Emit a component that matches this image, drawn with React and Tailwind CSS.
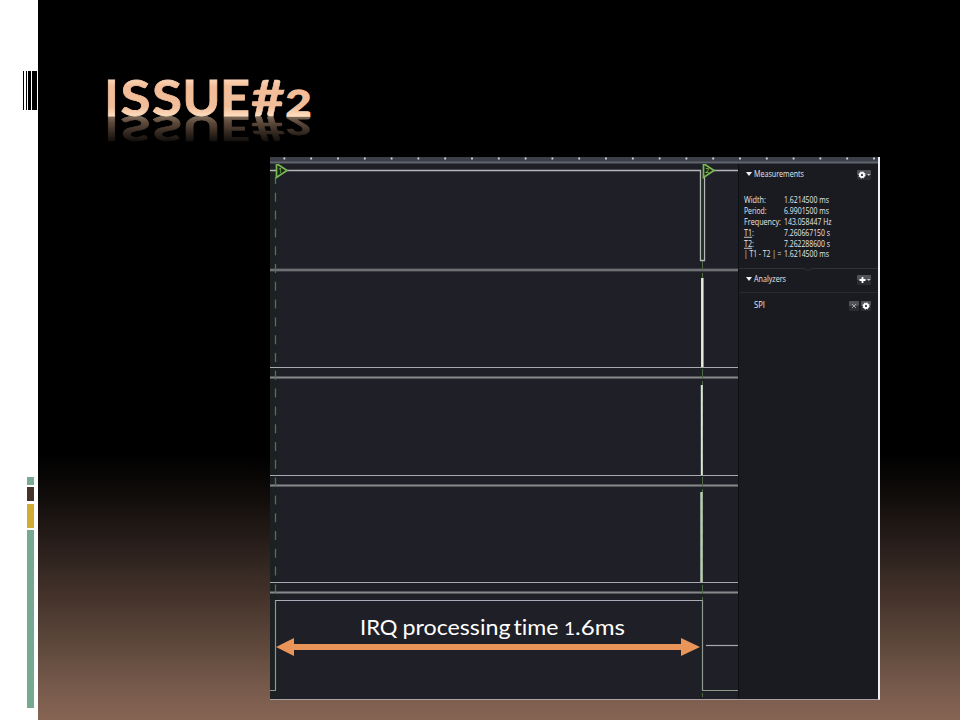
import React from "react";

// Title letters: glyph, left edge, advance width, font size, outline width
const LETTERS = [
  ["I", 66.6, 14, 49, 0.8],
  ["S", 82.5, 30, 49, 0.8],
  ["S", 114, 30, 49, 0.8],
  ["U", 144.5, 38, 49, 0.8],
  ["E", 182, 30, 49, 0.8],
  ["#", 213, 34, 49, 0.5],
  ["2", 247.5, 26, 37, 1.3],
];

function Title() {
  return (
    <svg className="block h-[157px] w-[322px] font-['Lato',sans-serif] font-bold" viewBox="0 0 322 157">
      <defs>
        <linearGradient id="peach" gradientUnits="userSpaceOnUse" x1="0" y1="-36" x2="0" y2="0">
          <stop offset="0" stopColor="#fbd5b8" />
          <stop offset="0.2" stopColor="#f3bd98" />
          <stop offset="0.75" stopColor="#f1bd99" />
          <stop offset="1" stopColor="#fddcbc" />
        </linearGradient>
        <linearGradient id="fade" gradientUnits="userSpaceOnUse" x1="0" y1="116" x2="0" y2="143">
          <stop offset="0" stopColor="#fff" stopOpacity="0.5" />
          <stop offset="1" stopColor="#fff" stopOpacity="0.04" />
        </linearGradient>
        <mask id="fadeMask" maskUnits="userSpaceOnUse" x="50" y="116" width="270" height="36">
          <rect x="50" y="116" width="270" height="36" fill="url(#fade)" />
        </mask>
        <filter id="soft"><feGaussianBlur stdDeviation="0.7" /></filter>
      </defs>
      <g transform="translate(0 115.5)">
        <g id="word" fill="url(#peach)" stroke="url(#peach)">
          {LETTERS.map(([c, x, w, size, sw], i) => (
            <text key={i} x={x} y="0" fontSize={size} strokeWidth={sw} textLength={w} lengthAdjust="spacingAndGlyphs">{c}</text>
          ))}
        </g>
      </g>
      <g mask="url(#fadeMask)">
        <g transform="translate(0 116) scale(1 -0.7)" filter="url(#soft)">
          <use href="#word" />
        </g>
      </g>
    </svg>
  );
}

function SideStrip() {
  return (
    <aside className="flex h-full w-[38px] shrink-0 flex-col items-end bg-white pt-[71px]">
      <div className="mr-[1px] flex h-[39px] w-[14px]">
        <div className="w-px bg-black" />
        <div className="ml-[2px] w-px bg-black" />
        <div className="ml-px w-[3px] bg-black" />
        <div className="ml-px w-[5px] bg-black" />
      </div>
      <div className="mr-[4px] mt-[367px] flex w-[7px] flex-col">
        <div className="h-[8px] bg-[#78ab92]" />
        <div className="mt-[2px] h-[14px] bg-[#453228]" />
        <div className="mt-[3px] h-[24px] bg-[#d2ab32]" />
        <div className="mt-[2px] h-[178px] bg-[#76aa90]" />
      </div>
    </aside>
  );
}

const DIVIDERS = [113, 220.5, 328.5, 435.5];
const BASELINES = [210.5, 318.5, 425.5];

function Marker({ x, n }) {
  return (
    <g>
      <path d={`M${x} 6.500V20.500L${x + 10.5} 13.500Z`} fill="#1b2419" stroke="#79b955" strokeWidth="1.700" />
      <text x={x + 1.8} y="16.200" fontSize="7" fill="#a5dc7d">{n}</text>
    </g>
  );
}

function Waveforms() {
  return (
    <svg className="block h-[535px] w-[468px] font-['Open_Sans',sans-serif]" viewBox="0 7 468 535">
      <rect width="468" height="542" fill="#1f2027" />
      <rect x="0" y="7" width="7" height="535" fill="#1b2022" />
      {DIVIDERS.map((y) => (
        <g key={y}>
          <rect x="0" y={y - 1.5} width="468" height="3" fill="#55565a" />
          <rect x="0" y={y - 0.5} width="468" height="1" fill="#88898d" />
        </g>
      ))}
      {BASELINES.map((y) => (
        <path key={y} d={`M0 ${y}H468`} stroke="#a9aab0" strokeWidth="1.200" />
      ))}
      <path d="M5.500 20V440" stroke="#56714f" strokeWidth="1.300" strokeDasharray="9 8.800" strokeDashoffset="2" />
      <path d="M432.500 104V540" stroke="#4b6940" strokeWidth="1" strokeDasharray="9 3" />
      <path d="M0 13.500H430.500V103.500H434.500V13.500H468" fill="none" stroke="#b4b6b8" strokeWidth="1.300" />
      <path d="M432.500 20V102" stroke="#243021" strokeWidth="2" />
      <path d="M432.300 121V210" stroke="#e7ecdc" strokeWidth="2.500" />
      <path d="M431.800 228V318" stroke="#dce4d3" strokeWidth="2" />
      <path d="M431.500 335V425" stroke="#b8cbb5" strokeWidth="2.500" />
      <path d="M0 533.500H5.500V443.500H432.500V533.500H468" fill="none" stroke="#8e988c" strokeWidth="1.200" />
      <path d="M5.500 443.500H432" stroke="#aaaab8" strokeWidth="1.200" />
      <path d="M436 488.500H468" stroke="#a9aab0" strokeWidth="1.200" />
      <Marker x={6.5} n="1" />
      <Marker x={433.5} n="2" />
      <path d="M20 490H415" stroke="#e99559" strokeWidth="6" />
      <path d="M6 490L24 481V499ZM430 490L411 481V499Z" fill="#e99559" />
      <g className="font-['Lato',sans-serif] [font-variant-ligatures:none]" fill="#fff" fontSize="21.500">
        <text x="90" y="478" textLength="37.500" lengthAdjust="spacingAndGlyphs">IRQ</text>
        <text x="132.500" y="478" textLength="108" lengthAdjust="spacingAndGlyphs">processing</text>
        <text x="243.500" y="478" textLength="45" lengthAdjust="spacingAndGlyphs">time</text>
        <text x="294" y="478" fontSize="16.500" textLength="11" lengthAdjust="spacingAndGlyphs">1</text>
        <text x="305" y="478" textLength="50" lengthAdjust="spacingAndGlyphs">.6ms</text>
      </g>
    </svg>
  );
}

function Ruler() {
  return (
    <svg className="block h-[7px] w-[608px]" viewBox="0 0 608 7">
      <rect width="608" height="7" fill="#3a3f48" />
      <rect y="4.500" width="608" height="1.500" fill="#62656e" />
      {Array.from({ length: 23 }, (_, i) => (
        <rect key={i} x={13.5 + i * 26.8} y="0.500" width="1.800" height="2" fill="#d6d7dc" />
      ))}
    </svg>
  );
}

function Fit({ width, children }) {
  return (
    <svg className="block h-[11px] shrink-0 overflow-visible" width={width} viewBox={`0 0 ${width} 11`}>
      <text x="0" y="7.800" fontSize="8.400" fill="#e6e7ea" textLength={width} lengthAdjust="spacingAndGlyphs">{children}</text>
    </svg>
  );
}

const Triangle = () => (
  <svg className="block h-[5px] w-[6px] shrink-0" viewBox="0 0 6 5"><path d="M0 0H6L3 4Z" fill="#f2f2f4" /></svg>
);

function ToolButton({ kind }) {
  const wide = kind !== "close" && kind !== "gear";
  const w = wide ? 14 : 10;
  return (
    <svg className="block h-[10px] shrink-0" width={w} viewBox={`0 0 ${w} 10`}>
      <rect width={w} height="10" rx="1" fill="#2b2c31" />
      <rect width={w} height="5" rx="1" fill="#515257" />
      {kind === "close" && <path d="M3 3L7 7M7 3L3 7" stroke="#a8a8ac" strokeWidth="1" />}
      {(kind === "gear" || kind === "gearMenu") && (
        <g>
          <circle cx="5" cy="5" r="2.100" fill="none" stroke="#fff" strokeWidth="1.900" />
          <circle cx="5" cy="5" r="3.200" fill="none" stroke="#fff" strokeWidth="0.900" strokeDasharray="1.257" />
        </g>
      )}
      {kind === "addMenu" && <path d="M2.500 5H8.500M5.500 2V8" stroke="#fff" strokeWidth="1.800" />}
      {wide && <path d="M10 4H13.500L11.750 6Z" fill="#c8c8c8" />}
    </svg>
  );
}

const ROWS = [
  ["Width:", 22, "1.6214500 ms", 45],
  ["Period:", 22.5, "6.9901500 ms", 45],
  ["Frequency:", 37, "143.058447 Hz", 47.5],
  ["T1:", 10, "7.260667150 s", 46],
  ["T2:", 10, "7.262288600 s", 46],
  ["| T1 - T2 | =", 37.5, "1.6214500 ms", 45],
];

function SidePanel() {
  return (
    <div className="flex h-[535px] w-[140px] flex-col border-l border-[#0e0f13] bg-[#1a1b20] font-['Open_Sans',sans-serif]">
      <div className="mt-[5px] flex h-[11px] items-center pl-[7px] pr-[7px]">
        <Triangle />
        <div className="ml-[2px]"><Fit width={50}>Measurements</Fit></div>
        <div className="ml-auto"><ToolButton kind="gearMenu" /></div>
      </div>
      <div className="mt-[15px] flex h-[65px] flex-col pl-[5px]">
        {ROWS.map(([label, lw, value, vw]) => (
          <div key={label} className="flex h-[10.9px]">
            <div className="w-[40px] shrink-0">
              <Fit width={lw}>
                {/^T\d:/.test(label) ? <><tspan textDecoration="underline">{label.slice(0, 2)}</tspan>:</> : label}
              </Fit>
            </div>
            <Fit width={vw}>{value}</Fit>
          </div>
        ))}
      </div>
      <svg className="mt-[6px] block h-[5px] w-[139px]" viewBox="0 0 139 5">
        <path d="M0 2.500H65L69 4.500L73 2.500H139" fill="none" stroke="#303137" />
      </svg>
      <div className="mt-[3px] flex h-[11px] items-center pl-[7px] pr-[7px]">
        <Triangle />
        <div className="ml-[2px]"><Fit width={32}>Analyzers</Fit></div>
        <div className="ml-auto"><ToolButton kind="addMenu" /></div>
      </div>
      <div className="mt-[7px] h-px bg-[#292a30]" />
      <div className="mt-[7px] flex h-[11px] items-center gap-[2px] pl-[15px] pr-[7px]">
        <Fit width={11}>SPI</Fit>
        <div className="ml-auto"><ToolButton kind="close" /></div>
        <ToolButton kind="gear" />
      </div>
    </div>
  );
}

export default function App() {
  return (
    <div className="flex h-[720px] w-[960px] overflow-hidden bg-black">
      <SideStrip />
      <main className="flex flex-1 flex-col bg-[linear-gradient(to_bottom,#000_0px,#000_455px,#120e0c_500px,#2b201c_550px,#46342c_600px,#604a3d_650px,#7b5d4e_695px,#866454_720px)]">
        <Title />
        <div className="ml-[232px] flex h-[543px] w-[610px] flex-col border-b border-r-2 border-b-[#a9a3a3] border-r-[#eef0f4]">
          <Ruler />
          <div className="flex">
            <Waveforms />
            <SidePanel />
          </div>
        </div>
      </main>
    </div>
  );
}
